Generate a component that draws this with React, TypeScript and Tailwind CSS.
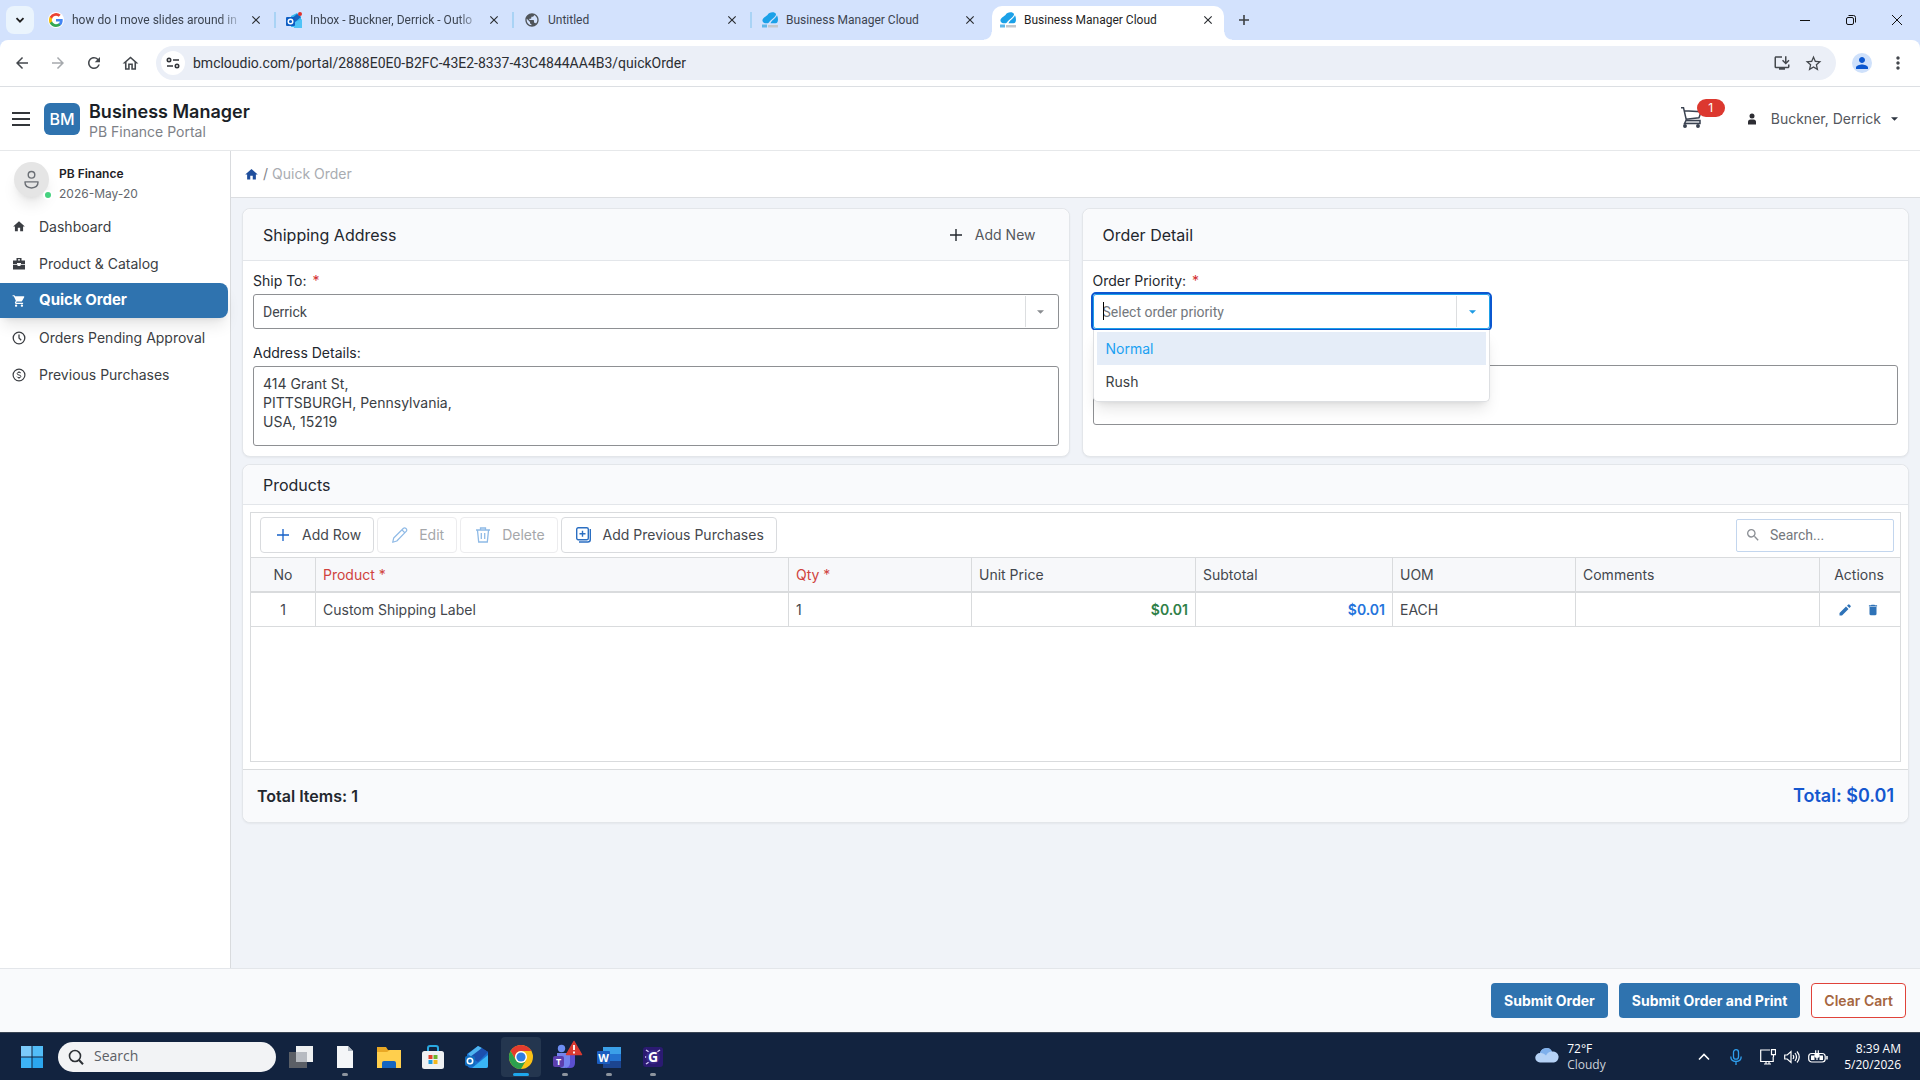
import React from "react";
import {
  MdArrowBack,
  MdArrowForward,
  MdClose,
  MdDelete,
  MdHome,
  MdMoreVert,
  MdOutlineHome,
  MdOutlineInstallDesktop,
  MdPerson,
  MdPublic,
  MdRefresh,
  MdSearch,
  MdShoppingCart,
  MdStarBorder,
} from "react-icons/md";

interface BrowserTab {
  title: string;
  icon: React.ReactNode;
  active?: boolean;
}

function GoogleIcon() {
  return (
    <span className="flex size-4 items-center justify-center rounded-full bg-white">
      <svg viewBox="0 0 24 24" className="size-[14px]">
        <path fill="#4285f4" d="M23.5 12.3c0-.9-.1-1.5-.2-2.2H12v4.5h6.6c-.3 1.5-1.1 2.7-2.4 3.5v3h3.9c2.200-2 3.400-5 3.400-8.800z" />
        <path fill="#34a853" d="M12 24c3.200 0 6-1.100 8-2.900l-3.900-3c-1.100.7-2.400 1.200-4.100 1.200-3.100 0-5.800-2.100-6.700-5H1.300v3.100C3.300 21.300 7.300 24 12 24z" />
        <path fill="#fbbc05" d="M5.300 14.300a7.200 7.200 0 0 1 0-4.600V6.600h-4a12 12 0 0 0 0 10.800z" />
        <path fill="#ea4335" d="M12 4.800c1.800 0 3.300.6 4.600 1.800L20 3.200A12 12 0 0 0 1.300 6.600l4 3.100c.9-2.900 3.600-4.900 6.700-4.900z" />
      </svg>
    </span>
  );
}

function OutlookTabIcon() {
  return (
    <svg viewBox="0 0 16 16" className="size-4">
      <path d="M5 4l6-3 4 4v10H5z" fill="#35b8f1" />
      <path d="M5 7l6-5 4 3-7 6z" fill="#1565c0" />
      <path d="M7 11l9-4v9H8z" fill="#4fc3f7" />
      <rect x="0" y="5" width="9" height="9" rx="1" fill="#0f5fc4" />
      <circle cx="4.500" cy="9.500" r="2.300" fill="none" stroke="#fff" strokeWidth="1.400" />
      <circle cx="14" cy="2" r="2" fill="#e0312c" />
    </svg>
  );
}

function CloudLogo() {
  return (
    <svg viewBox="0 0 16 16" className="size-4">
      <path d="M.5 9C0 6 4 4.500 5.500 3 7-.5 13-.5 14 2c.2 3-5 5-7 8.500-2 1.500-6 1-6.500-1.500z" fill="#1ba1e8" />
      <path d="M8.500 11.300c1-3 5-4.500 6.500-8 1.500 3 1.500 8-1.500 8z" fill="#1ba1e8" />
      <path d="M0 12.500h5v3H0z" fill="#5fb7e8" />
      <path d="M6 13h10v2.500H6z" fill="#c4c8cc" />
    </svg>
  );
}

const tabs: BrowserTab[] = [
  { title: "how do I move slides around in", icon: <GoogleIcon /> },
  { title: "Inbox - Buckner, Derrick - Outlo", icon: <OutlookTabIcon /> },
  { title: "Untitled", icon: <MdPublic className="size-[18px] text-[#50555a]" /> },
  { title: "Business Manager Cloud", icon: <CloudLogo /> },
  { title: "Business Manager Cloud", icon: <CloudLogo />, active: true },
];

function TabStrip() {
  return (
    <div className="flex h-10 items-center bg-[#d3e2fd] font-['Roboto',sans-serif]">
      <button
        type="button"
        aria-label="Search tabs"
        className="ml-[6px] flex h-7 w-7 items-center justify-center rounded-lg bg-[#eaf4fd]"
      >
        <svg viewBox="0 0 10 10" className="size-[10px]" fill="none" stroke="#1f1f1f" strokeWidth="1.800">
          <path d="M1.500 3.200L5 6.700l3.500-3.500" />
        </svg>
      </button>
      <div className="ml-[6px] flex h-full items-center gap-[6px]">
        {tabs.map((tab, i) => (
          <div
            key={i}
            className={`relative flex w-[232px] items-center pr-2 pl-2 ${
              tab.active ? "h-[34px] self-end rounded-t-[10px] bg-white pb-[6px]" : "h-7"
            }`}
          >
            <span className="flex w-4 shrink-0 justify-center">{tab.icon}</span>
            <span
              className={`ml-2 flex-1 overflow-hidden text-xs whitespace-nowrap ${
                tab.active ? "text-[#1f1f1f]" : "text-[#3c4450]"
              } ${i < 2 ? "[mask-image:linear-gradient(to_right,#000_86%,transparent)]" : ""}`}
            >
              {tab.title}
            </span>
            <button type="button" aria-label={`Close ${tab.title}`} className="ml-1 flex size-4 items-center justify-center">
              <MdClose className="size-[14px] text-[#2a2d31]" />
            </button>
            {i < 3 && <span className="absolute top-[6px] -right-1 h-4 w-[2px] bg-[#a9d3f5]" />}
            {tab.active && (
              <>
                <span className="absolute bottom-0 -left-2 size-2 bg-[radial-gradient(circle_at_0_0,transparent_7px,#fff_8px)]" />
                <span className="absolute -right-2 bottom-0 size-2 bg-[radial-gradient(circle_at_100%_0,transparent_7px,#fff_8px)]" />
              </>
            )}
          </div>
        ))}
      </div>
      <button type="button" aria-label="New tab" className="ml-2 flex size-6 items-center justify-center">
        <svg viewBox="0 0 12 12" className="size-3" stroke="#3c4043" strokeWidth="1.600">
          <path d="M6 1v10M1 6h10" />
        </svg>
      </button>
      <div className="ml-auto flex text-[#111]">
        <button type="button" aria-label="Minimize" className="flex w-[46px] justify-center">
          <svg viewBox="0 0 10 10" className="size-[10px]" stroke="currentColor"><path d="M0 5.500h10" /></svg>
        </button>
        <button type="button" aria-label="Restore" className="flex w-[46px] justify-center">
          <svg viewBox="0 0 10 10" className="size-[10px]" fill="none" stroke="currentColor">
            <rect x=".5" y="2.500" width="7" height="7" rx="1.500" />
            <path d="M2.500.5h5a2 2 0 0 1 2 2v5" />
          </svg>
        </button>
        <button type="button" aria-label="Close window" className="flex w-[46px] justify-center">
          <svg viewBox="0 0 10 10" className="size-[10px]" stroke="currentColor"><path d="M0 0l10 10M10 0L0 10" /></svg>
        </button>
      </div>
    </div>
  );
}

function AddressBar() {
  return (
    <div className="bg-[#d3e2fd]">
      <div className="flex h-[47px] items-center rounded-t-lg border-b border-[#dcdfe3] bg-white pl-[13px] font-['Roboto',sans-serif] text-[#44484d]">
        <div className="flex gap-[18px]">
          <button type="button" aria-label="Back"><MdArrowBack className="size-[18px]" /></button>
          <button type="button" aria-label="Forward"><MdArrowForward className="size-[18px] text-[#a6a9ad]" /></button>
          <button type="button" aria-label="Reload"><MdRefresh className="size-[18px]" /></button>
          <button type="button" aria-label="Home"><MdOutlineHome className="size-[19px]" /></button>
        </div>
        <div className="ml-4 flex h-[34px] flex-1 items-center rounded-full bg-[#ebeff7] pr-[13px] pl-[5px]">
          <button type="button" aria-label="Site information" className="flex size-6 items-center justify-center rounded-full bg-white">
            <svg viewBox="0 0 14 12" className="h-3 w-[14px]" fill="none" stroke="#303338" strokeWidth="1.600">
              <circle cx="3" cy="3" r="1.700" />
              <path d="M7 3h6M1 9h6" />
              <circle cx="11" cy="9" r="1.700" />
            </svg>
          </button>
          <input
            type="text"
            aria-label="Address"
            readOnly
            value="bmcloudio.com/portal/2888E0E0-B2FC-43E2-8337-43C4844AA4B3/quickOrder"
            className="ml-2 flex-1 bg-transparent text-sm text-[#2b2e33] outline-none"
          />
          <div className="flex gap-[13px]">
            <button type="button" aria-label="Install app"><MdOutlineInstallDesktop className="size-[18px]" /></button>
            <button type="button" aria-label="Bookmark"><MdStarBorder className="size-[19px]" /></button>
          </div>
        </div>
        <button type="button" aria-label="Profile" className="ml-4 flex size-5 items-center justify-center rounded-full bg-[#cfe1fb]">
          <MdPerson className="size-[18px] text-[#0b57d0]" />
        </button>
        <button type="button" aria-label="Browser menu" className="mr-3 ml-4">
          <MdMoreVert className="size-5" />
        </button>
      </div>
    </div>
  );
}

function Caret({ className }: Readonly<{ className: string }>) {
  return (
    <svg viewBox="0 0 8 4" className={`h-1 w-[7px] ${className}`} fill="currentColor">
      <path d="M0 0h8L4 4z" />
    </svg>
  );
}

function PortalHeader() {
  return (
    <header className="flex h-16 items-center border-b border-[#e6e8ea] bg-white pr-[22px] pl-3">
      <button type="button" aria-label="Toggle menu">
        <svg viewBox="0 0 18 14" className="h-[14px] w-[18px]" stroke="#33363a" strokeWidth="2">
          <path d="M0 1h18M0 7h18M0 13h18" />
        </svg>
      </button>
      <div className="ml-[14px] flex h-8 w-9 items-center justify-center rounded-md bg-[#2f73af] text-base font-medium text-white">
        BM
      </div>
      <div className="ml-[9px] pt-[6px]">
        <h1 className="text-lg leading-5 font-semibold text-[#1b1f27]">Business Manager</h1>
        <p className="text-sm leading-5 text-[#7d8187]">PB Finance Portal</p>
      </div>
      <button type="button" aria-label="Cart" className="relative ml-auto h-8 w-11">
        <svg viewBox="0 0 22 22" className="mb-[3px] size-[22px]" fill="none" stroke="#3a4250" strokeWidth="1.500">
          <path d="M0 1.700h2.500l3 13h13M3.300 4.700l16.700 1-2 6-13 1.500" />
          <path d="M3.500 17.500l1.500-3h14v3z" fill="#dfe2e6" />
          <circle cx="4" cy="20" r="1.200" fill="#3a4250" />
          <circle cx="17" cy="20" r="1.200" fill="#3a4250" />
        </svg>
        <span className="absolute -top-[4px] right-0 flex h-[18px] w-7 items-center justify-center rounded-full bg-[#dc382f] text-xs text-white">
          1
        </span>
      </button>
      <button type="button" className="ml-[22px] flex items-center text-sm text-[#54575d]">
        <svg viewBox="0 0 10 12" className="h-3 w-[10px]" fill="#2d2d33">
          <circle cx="5" cy="3" r="2.500" />
          <path d="M1 11.500V9q0-2.500 2.500-2.500h3Q9 6.500 9 9v2.500z" />
        </svg>
        <span className="ml-[14px]">Buckner, Derrick</span>
        <Caret className="ml-[10px] text-[#2d3440]" />
      </button>
    </header>
  );
}

function ToolboxIcon() {
  return (
    <svg viewBox="0 0 12 12" className="size-3" fill="currentColor">
      <path d="M3.500 0h5v2.500H12V6H8V5H4v1H0V2.500h3.500zM5 1.300v1.200h2V1.300z" fillRule="evenodd" />
      <path d="M0 6.800h4.500V8h3V6.800H12V11.500H0z" />
    </svg>
  );
}

function ClockIcon() {
  return (
    <svg viewBox="0 0 14 14" className="size-[14px]" fill="none" stroke="currentColor" strokeWidth="1.300">
      <circle cx="7" cy="7" r="5.800" />
      <path d="M7 3.500V7l2.200 2.200" />
    </svg>
  );
}

function DollarIcon() {
  return (
    <svg viewBox="0 0 14 14" className="size-[14px]" fill="none" stroke="currentColor" strokeWidth="1.200">
      <circle cx="7" cy="7" r="5.900" />
      <path d="M9 5.200Q8.500 4.300 7 4.300q-1.800 0-1.800 1.300T7 7t1.800 1.400T7 9.700q-1.500 0-2-1M7 3.300v1M7 9.700v1" strokeWidth="1" />
    </svg>
  );
}

const navItems = [
  { label: "Dashboard", icon: <MdHome className="size-[15px]" /> },
  { label: "Product & Catalog", icon: <ToolboxIcon /> },
  { label: "Quick Order", icon: <MdShoppingCart className="size-[14px]" />, active: true },
  { label: "Orders Pending Approval", icon: <ClockIcon /> },
  { label: "Previous Purchases", icon: <DollarIcon /> },
];

function Sidebar() {
  return (
    <aside className="w-[231px] shrink-0 border-r border-[#d9dbde] bg-white">
      <div className="flex items-start pt-[11px] pl-[14px]">
        <div className="relative flex size-[35px] items-center justify-center rounded-full bg-[#e5e5e5] shadow-lg">
          <svg viewBox="0 0 16 20" className="h-[19px] w-[15px]" fill="none" stroke="#6b6f75" strokeWidth="1.500">
            <circle cx="8" cy="5" r="3.500" />
            <path d="M1 12.500h14q0 6.500-7 6.500t-7-6.500z" strokeLinejoin="round" />
          </svg>
          <span className="absolute -right-1 -bottom-[3px] size-[10px] rounded-full border-2 border-white bg-[#45d27f]" />
        </div>
        <div className="mt-[2px] ml-[10px] text-xs leading-5">
          <p className="font-semibold text-[#1e2126]">PB Finance</p>
          <p className="text-[#63676d]">2026-May-20</p>
        </div>
      </div>
      <nav className="mt-[5px] flex flex-col gap-[2px]">
        {navItems.map((item) => (
          <a
            key={item.label}
            href="#"
            className={`mr-[2px] flex h-[35px] items-center pl-3 ${
              item.active
                ? "rounded-r-lg bg-[#2f73af] text-[15px] font-bold text-white shadow-lg"
                : "text-sm text-[#3b3e43]"
            }`}
          >
            <span className="flex w-[14px] justify-center">{item.icon}</span>
            <span className="ml-[13px]">{item.label}</span>
          </a>
        ))}
      </nav>
    </aside>
  );
}

function Card({
  title,
  action,
  children,
}: Readonly<{ title: string; action?: React.ReactNode; children: React.ReactNode }>) {
  return (
    <section className="flex flex-col rounded-lg border border-[#e3e6ea] bg-white shadow-xs">
      <div className="flex h-[52px] items-center justify-between rounded-t-lg border-b border-[#e3e6ea] bg-[#f9fafc] pr-[33px] pl-5">
        <h2 className="text-base text-[#23272e]">{title}</h2>
        {action}
      </div>
      <div className="flex flex-1 flex-col px-[10px] pt-[10px] pb-[10px]">{children}</div>
    </section>
  );
}

function FieldLabel({ htmlFor, text, required }: Readonly<{ htmlFor: string; text: string; required?: boolean }>) {
  return (
    <label htmlFor={htmlFor} className="mb-[3px] block text-sm leading-5 text-[#23272e]">
      {text}
      {required && <span className="ml-[6px] text-[#d32f2f]">*</span>}
    </label>
  );
}

function ShippingCard() {
  return (
    <Card
      title="Shipping Address"
      action={
        <button type="button" className="flex items-center text-sm text-[#54575d]">
          <svg viewBox="0 0 12 12" className="size-3" stroke="#23272e" strokeWidth="1.400">
            <path d="M6 0v12M0 6h12" />
          </svg>
          <span className="ml-[13px]">Add New</span>
        </button>
      }
    >
      <FieldLabel htmlFor="ship-to" text="Ship To:" required />
      <div className="relative">
        <select
          id="ship-to"
          className="h-[35px] w-full appearance-none rounded-[3px] border border-[#8e9093] bg-white px-[9px] font-['Roboto',sans-serif] text-sm text-[#43474d]"
        >
          <option>Derrick</option>
        </select>
        <span className="pointer-events-none absolute inset-y-[2px] right-0 flex w-[34px] items-center justify-center border-l border-[#dcdee0] pr-1">
          <Caret className="text-[#8a8d91]" />
        </span>
      </div>
      <div className="mt-[14px]">
        <FieldLabel htmlFor="address" text="Address Details:" />
        <textarea
          id="address"
          readOnly
          className="block h-20 w-full resize-none rounded-[3px] border border-[#8e9093] px-[9px] py-[7px] text-sm leading-[19px] text-[#3a3e44]"
          defaultValue={"414 Grant St,\nPITTSBURGH, Pennsylvania,\nUSA, 15219"}
        />
      </div>
    </Card>
  );
}

function OrderCard() {
  return (
    <Card title="Order Detail">
      <FieldLabel htmlFor="priority" text="Order Priority:" required />
      <div className="relative w-[397px]">
        <input
          id="priority"
          role="combobox"
          aria-expanded="true"
          aria-controls="priority-list"
          placeholder="Select order priority"
          className="block h-[35px] w-full rounded-[3px] border border-[#1ea0e8] bg-white px-[9px] font-['Roboto',sans-serif] text-sm outline-2 outline-[#0b57d0] placeholder:text-[#74787d]"
        />
        <span className="absolute top-2 left-[10px] h-[18px] w-px bg-black" />
        <span className="absolute inset-y-[2px] right-0 flex w-[34px] items-center justify-center border-l border-[#dcdee0] pr-[2px]">
          <Caret className="text-[#1e9be4]" />
        </span>
        <ul
          id="priority-list"
          role="listbox"
          className="absolute top-9 right-0 left-0 z-10 rounded-b-[5px] border border-t-0 border-[#dddfe2] bg-white px-[3px] pt-[2px] pb-[3px] text-sm shadow-lg"
        >
          <li role="option" aria-selected="true" className="flex h-[33px] items-center bg-[#e5edf8] px-[9px] text-[#1ba1f2]">
            Normal
          </li>
          <li role="option" aria-selected="false" className="flex h-[33px] items-center px-[9px] text-[#3b3e43]">
            Rush
          </li>
        </ul>
      </div>
      <textarea
        aria-label="Order comments"
        className="mt-9 block h-[60px] w-full resize-none rounded-[3px] border border-[#8e9093]"
      />
    </Card>
  );
}

function ToolButton({
  icon,
  label,
  disabled,
}: Readonly<{ icon: React.ReactNode; label: string; disabled?: boolean }>) {
  return (
    <button
      type="button"
      disabled={disabled}
      className={`flex h-9 items-center rounded border px-3 text-sm ${
        disabled ? "border-[#ececee] text-[#a5a7aa]" : "border-[#d9dbde] text-[#45484d]"
      }`}
    >
      <span className="flex w-5 justify-center">{icon}</span>
      <span className="ml-[9px]">{label}</span>
    </button>
  );
}

function ProductsCard() {
  const cell = "h-[34px] border-r border-b border-[#d9dbdd] px-[7px]";
  const head = "h-[34px] border-r border-[#d9dbdd] px-[7px] text-left font-normal";

  return (
    <section className="rounded-lg border border-[#e3e6ea] bg-white shadow-xs">
      <div className="flex h-10 items-center rounded-t-lg border-b border-[#e3e6ea] bg-[#f9fafc] pl-5">
        <h2 className="text-base text-[#23272e]">Products</h2>
      </div>
      <div className="mx-[7px] my-[7px] border border-[#d9dbdd]">
        <div className="flex h-11 items-center gap-[3px] pr-[6px] pl-[9px]">
          <ToolButton
            label="Add Row"
            icon={
              <svg viewBox="0 0 14 14" className="size-[14px]" stroke="#1560c8" strokeWidth="1.300">
                <path d="M7 1v12M1 7h12" />
              </svg>
            }
          />
          <ToolButton
            label="Edit"
            disabled
            icon={
              <svg viewBox="0 0 16 16" className="size-4" fill="none" stroke="#8fbae6" strokeWidth="1.200" strokeLinejoin="round">
                <path d="M.7 15.300l1-4.300L11.500 1.300q1.200-1 2.500.2t.4 2.700L4.800 14zM10 2.800L13 6" />
              </svg>
            }
          />
          <ToolButton
            label="Delete"
            disabled
            icon={
              <svg viewBox="0 0 16 16" className="size-4" fill="none" stroke="#8fbae6" strokeWidth="1.300">
                <path d="M1 3h14M5.500 3V1h5v2M2.500 3.500l1.200 11.500h8.600l1.200-11.500M6.300 6v6M9.700 6v6" />
              </svg>
            }
          />
          <ToolButton
            label="Add Previous Purchases"
            icon={
              <svg viewBox="0 0 16 16" className="size-4" fill="none" stroke="#2b6fc2" strokeWidth="1.400">
                <rect x=".7" y=".7" width="11.600" height="12" rx="1.500" />
                <path d="M6.500 3.700v6M3.500 6.700h6M14.300 2v10.500q0 2.500-2.500 2.500H3" />
              </svg>
            }
          />
          <div className="relative ml-auto">
            <MdSearch className="absolute top-2 left-[9px] size-4 text-[#8b8f95]" />
            <input
              type="search"
              aria-label="Search products"
              placeholder="Search..."
              className="block h-[33px] w-[158px] rounded-[2px] border border-[#c3d6ee] pl-[33px] font-['Roboto',sans-serif] text-sm placeholder:text-[#74787d]"
            />
          </div>
        </div>
        <div className="h-[204px] border-t border-[#d9dbdd]">
          <table className="w-full table-fixed border-separate border-spacing-0 text-sm text-[#43474d]">
            <thead className="bg-[#f7f8fa]">
              <tr className="*:border-b-2">
                <th className="h-[35px] w-[65px] border-r border-[#d9dbdd] text-center font-normal">No</th>
                <th className={`${head} text-[#d0433d]`}>Product *</th>
                <th className={`${head} w-[183px] text-[#d0433d]`}>Qty *</th>
                <th className={`${head} w-[224px]`}>Unit Price</th>
                <th className={`${head} w-[197px]`}>Subtotal</th>
                <th className={`${head} w-[183px]`}>UOM</th>
                <th className={`${head} w-[244px]`}>Comments</th>
                <th className="w-20 border-[#d9dbdd] pr-[2px] text-center font-normal">Actions</th>
              </tr>
            </thead>
            <tbody>
              <tr>
                <td className={`${cell} text-center`}>1</td>
                <td className={cell}>Custom Shipping Label</td>
                <td className={cell}>1</td>
                <td className={`${cell} text-right font-semibold text-[#2f8048]`}>$0.01</td>
                <td className={`${cell} text-right font-semibold text-[#2474dc]`}>$0.01</td>
                <td className={cell}>EACH</td>
                <td className={cell} />
                <td className="border-b border-[#d9dbdd] pr-[2px]">
                  <div className="flex items-center justify-center gap-[15px] text-[#2f73b8]">
                    <button type="button" aria-label="Edit row">
                      <svg viewBox="0 0 12 12" className="size-3" fill="currentColor">
                        <path d="M.5 9L7 2.500 9.500 5 3 11.500H.5zM8 1.700l1-1q.8-.8 1.600 0l.8.800q.8.800 0 1.600l-1 1z" />
                      </svg>
                    </button>
                    <button type="button" aria-label="Delete row"><MdDelete className="size-[14px]" /></button>
                  </div>
                </td>
              </tr>
            </tbody>
          </table>
        </div>
      </div>
      <div className="flex h-[53px] items-center justify-between rounded-b-lg border-t border-[#d9dbdd] bg-[#f9fafc] px-[14px]">
        <span className="text-base font-semibold text-[#23272e]">Total Items: 1</span>
        <span className="text-lg font-semibold text-[#1557cf]">Total: $0.01</span>
      </div>
    </section>
  );
}

function TaskIcon({
  label,
  running,
  active,
  children,
}: Readonly<{ label: string; running?: boolean; active?: boolean; children: React.ReactNode }>) {
  return (
    <button
      type="button"
      aria-label={label}
      className={`relative flex h-10 w-10 items-center justify-center rounded ${active ? "bg-[#24364f]" : ""}`}
    >
      <svg viewBox="0 0 24 24" className="size-6 overflow-visible">{children}</svg>
      {running && <span className="absolute bottom-[1px] h-[3px] w-[6px] rounded-full bg-[#8d949e]" />}
      {active && <span className="absolute bottom-[1px] h-[3px] w-4 rounded-full bg-[#1ea7ec]" />}
    </button>
  );
}

function Taskbar() {
  return (
    <footer className="flex h-12 items-center border-t border-[#3a4555] bg-[#12233f] font-['Open_Sans',sans-serif] text-white">
      <button type="button" aria-label="Start" className="ml-5">
        <svg viewBox="0 0 24 24" className="size-6">
          <path fill="#7ccbfa" d="M1 1h10.500v10.500H1z" />
          <path fill="#52bdf8" d="M12.500 1H23v10.500H12.500z" />
          <path fill="#3db4f7" d="M1 12.500h10.500V23H1z" />
          <path fill="#2ba6ee" d="M12.500 12.500H23V23H12.500z" />
        </svg>
      </button>
      <div className="relative ml-[14px]">
        <svg viewBox="0 0 16 16" className="absolute top-[7px] left-[10px] size-4" fill="none" stroke="#2d3136" strokeWidth="1.600">
          <circle cx="7" cy="7" r="5.500" />
          <path d="M11 11l4 4.300" strokeWidth="2" />
        </svg>
        <input
          type="search"
          aria-label="Search Windows"
          placeholder="Search"
          className="block h-[30px] w-[218px] rounded-full bg-[#f2f3f5] pb-[2px] pl-9 text-sm placeholder:text-[#5c6066]"
        />
      </div>
      <div className="ml-[5px] flex gap-1">
        <TaskIcon label="Task view">
          <path d="M7 1h17v16H7z" fill="#eef0f1" />
          <path d="M0 7h18v16H0z" fill="#5b5f66" />
          <path d="M7 7h11v10H7z" fill="#b7bbc1" />
        </TaskIcon>
        <TaskIcon label="Document" running>
          <path d="M4 1h11l5 5v17H4z" fill="#f4f6f8" />
          <path d="M15 1v5h5z" fill="#aeb6c0" />
        </TaskIcon>
        <TaskIcon label="File Explorer">
          <path d="M0 2h9l2 3h13v18H0z" fill="#e9a825" />
          <path d="M0 7h10l3-2h11v18H0z" fill="#ffcf4d" />
          <path d="M5 23v-5q0-2 2-2h10q2 0 2 2v5z" fill="#1565c0" />
        </TaskIcon>
        <TaskIcon label="Microsoft Store">
          <path d="M7 8V3q0-2 2-2h6q2 0 2 2v5" fill="none" stroke="#29a8e0" strokeWidth="2" />
          <rect x="1" y="6" width="22" height="18" rx="2.500" fill="#eff1f3" />
          <path d="M7.500 10h4v4h-4z" fill="#e2422f" />
          <path d="M12.500 10h4v4h-4z" fill="#6cb52d" />
          <path d="M7.500 15h4v4h-4z" fill="#1c9ce0" />
          <path d="M12.500 15h4v4h-4z" fill="#f5b81c" />
        </TaskIcon>
        <TaskIcon label="Outlook">
          <path d="M2 9L13 1l10 6v14q0 2-2 2H6q-3 0-4-3z" fill="#1a6fd0" />
          <path d="M3 9L13 1l4 2-9 10z" fill="#4fb4ef" />
          <path d="M5 12L17 3l6 4-10 10z" fill="#1b4fae" />
          <path d="M23 10v11q0 2-2 2H7z" fill="#39b5f5" />
          <rect x="0" y="11" width="10" height="10" rx="2" fill="#0f6cbd" />
          <circle cx="5" cy="16" r="2.700" fill="none" stroke="#fff" strokeWidth="1.600" />
        </TaskIcon>
        <TaskIcon label="Chrome" active>
          <circle cx="12" cy="12" r="12" fill="#fbc116" />
          <path d="M1.600 6A12 12 0 0 1 22.400 6H12a6 6 0 0 0-5.200 9z" fill="#e33b2e" />
          <path d="M1.600 6A12 12 0 0 0 12 24l5.200-9A6 6 0 0 1 6.800 15z" fill="#2da04e" />
          <circle cx="12" cy="12" r="6" fill="#fff" />
          <circle cx="12" cy="12" r="4.600" fill="#2f7de1" />
        </TaskIcon>
        <TaskIcon label="Teams" running>
          <circle cx="8.500" cy="3.500" r="3.700" fill="#6d8df2" />
          <path d="M13 9h9v9q0 5-5 5h-4z" fill="#5a4fd0" />
          <path d="M4 8h13v10q0 5-6 5t-7-5z" fill="#7483ee" />
          <rect x="0" y="11" width="11" height="11" rx="2" fill="#5b3fae" />
          <text x="5.500" y="20" fontSize="9" fontWeight="700" textAnchor="middle" fill="#fff">T</text>
          <path d="M21-3.500L28.500 9.500h-15z" fill="#d93a30" stroke="#d93a30" strokeWidth="1.500" strokeLinejoin="round" />
          <path d="M21 0v5M21 6.500v2" stroke="#fff" strokeWidth="1.800" />
        </TaskIcon>
        <TaskIcon label="Word" running>
          <path d="M6 2h18v7H6z" fill="#3ba0e8" />
          <path d="M6 9h18v7H6z" fill="#2372cf" />
          <path d="M6 16h18v7H6z" fill="#1c4590" />
          <rect x="0" y="6" width="13" height="13" rx="1" fill="#1b5cbe" />
          <text x="6.500" y="16.500" fontSize="11" fontWeight="700" textAnchor="middle" fill="#fff">W</text>
        </TaskIcon>
        <TaskIcon label="G app" running>
          <rect x="2" y="2" width="20" height="20" rx="3" fill="#2b1a72" />
          <path d="M5 5l3 2M19 5l-3 2M4 12h3M5 19l3-2" stroke="#d5cdf5" strokeWidth="1.500" />
          <circle cx="12" cy="12" r="7" fill="#3a2787" />
          <text x="12" y="17" fontSize="14" fontWeight="700" textAnchor="middle" fill="#fff">G</text>
        </TaskIcon>
      </div>
      <div className="ml-auto flex items-center text-xs leading-4">
        <svg viewBox="0 0 24 16" className="mb-1 h-4 w-6">
          <path d="M5 15.500a4.700 4.700 0 0 1 0-9.500A6.500 6.500 0 0 1 17 4.500a5.500 5.500 0 0 1 2 11z" fill="#b5d2f6" />
          <path d="M5 6A6.500 6.500 0 0 1 17 4.500q-4 0-6 4-2-3-6-2.500z" fill="#7fb0ec" />
        </svg>
        <div className="ml-2 w-[131px]">
          <p>72°F</p>
          <p className="text-[#ccd2da]">Cloudy</p>
        </div>
        <svg viewBox="0 0 12 8" className="h-2 w-3" fill="none" stroke="#fff" strokeWidth="1.600">
          <path d="M1 6.500l5-5 5 5" />
        </svg>
        <svg viewBox="0 0 12 16" className="ml-5 h-4 w-3" fill="none" stroke="#2f9fee" strokeWidth="1.300">
          <rect x="3.500" y=".7" width="5" height="9.500" rx="2.500" />
          <path d="M.8 7.500q0 5 5.200 5t5.200-5M6 12.500V16" />
        </svg>
        <svg viewBox="0 0 16 16" className="ml-[18px] size-4" fill="none" stroke="#fff" strokeWidth="1.200">
          <path d="M10 1H.7v11.500h12.500V8M4 15h7M6 12.500V15M9 12.500V15M11.500.7h4v5h-4zM13.500 5.700V8" />
        </svg>
        <svg viewBox="0 0 16 14" className="ml-2 h-[14px] w-4" fill="none" stroke="#fff" strokeWidth="1.200">
          <path d="M.7 5v4h2.500L7 12.500v-11L3.200 5zM9 5q1.500 2 0 4M11 3q3 4 0 8M13 1.500q4.500 5.500 0 11" />
        </svg>
        <svg viewBox="0 0 20 14" className="ml-2 h-[14px] w-5" fill="none" stroke="#fff" strokeWidth="1.200">
          <rect x=".7" y="3.500" width="16.500" height="8.500" rx="3" />
          <path d="M19 6v3.500" strokeWidth="1.500" />
          <path d="M3 5.500h3.500V10H3zM11.500 5.500H15V10h-3.500zM6.500 3h5v3q0 2-2.500 2T6.500 6z" fill="#fff" stroke="none" />
          <path d="M7.700.3V3M10.300.3V3M9 7v3" />
        </svg>
        <div className="mr-[19px] ml-4 text-right">
          <p>8:39 AM</p>
          <p>5/20/2026</p>
        </div>
      </div>
    </footer>
  );
}

export default function App() {
  return (
    <div className="flex min-h-screen flex-col bg-[#f0f3f8] font-['Inter',sans-serif]">
      <TabStrip />
      <AddressBar />
      <PortalHeader />
      <div className="flex flex-1">
        <Sidebar />
        <main className="flex-1">
          <nav aria-label="Breadcrumb" className="flex h-[47px] items-center border-b border-[#dcdee1] bg-white pl-[13px] text-sm text-[#a9acb1]">
            <a href="#" aria-label="Home"><MdHome className="size-[15px] text-[#1f4e9c]" /></a>
            <span className="mx-1 text-[#7f8389]">/</span>
            <span>Quick Order</span>
          </nav>
          <div className="flex flex-col gap-[7px] px-[11px] pt-[10px]">
            <div className="grid grid-cols-2 gap-3">
              <ShippingCard />
              <OrderCard />
            </div>
            <ProductsCard />
          </div>
        </main>
      </div>
      <div className="flex h-16 items-center justify-end gap-[11px] border-t border-[#e3e6ea] bg-[#f9fafc] pr-[14px] text-sm font-bold">
        <button type="button" className="h-[35px] rounded bg-[#2f73af] px-[13px] text-white">Submit Order</button>
        <button type="button" className="h-[35px] rounded bg-[#2f73af] px-[13px] text-white">Submit Order and Print</button>
        <button type="button" className="h-[35px] rounded border border-[#e0433a] bg-white px-3 font-semibold text-[#a5663f]">
          Clear Cart
        </button>
      </div>
      <Taskbar />
    </div>
  );
}
